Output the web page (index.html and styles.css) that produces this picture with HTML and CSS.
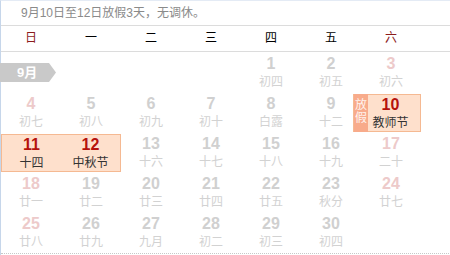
FILE: index.html
```html
<!DOCTYPE html>
<html lang="zh-CN">
<head>
    <meta charset="UTF-8">
    <meta name="viewport" content="width=device-width, initial-scale=1.0">
    <title>九月日历</title>
    <link rel="stylesheet" href="styles.css">
</head>
<body>
<div class="calendar">
    <div class="notice">9月10日至12日放假3天，无调休。</div>

    <div class="weekdays">
        <div class="weekend">日</div>
        <div>一</div>
        <div>二</div>
        <div>三</div>
        <div>四</div>
        <div>五</div>
        <div class="weekend">六</div>
    </div>

    <!-- month label sits over the empty start of the first week -->
    <div class="month-tag">9月</div>

    <div class="days">
        <div class="day empty"></div>
        <div class="day empty"></div>
        <div class="day empty"></div>
        <div class="day empty"></div>
        <div class="day"><span class="num">1</span><span class="lunar">初四</span></div>
        <div class="day"><span class="num">2</span><span class="lunar">初五</span></div>
        <div class="day sat"><span class="num">3</span><span class="lunar">初六</span></div>

        <div class="day sun"><span class="num">4</span><span class="lunar">初七</span></div>
        <div class="day"><span class="num">5</span><span class="lunar">初八</span></div>
        <div class="day"><span class="num">6</span><span class="lunar">初九</span></div>
        <div class="day"><span class="num">7</span><span class="lunar">初十</span></div>
        <div class="day"><span class="num">8</span><span class="lunar">白露</span></div>
        <div class="day"><span class="num">9</span><span class="lunar">十二</span></div>
        <div class="day holiday single"><span class="off-tag">放<br>假</span><span class="num">10</span><span class="lunar">教师节</span></div>

        <div class="day holiday first"><span class="num">11</span><span class="lunar">十四</span></div>
        <div class="day holiday last"><span class="num">12</span><span class="lunar">中秋节</span></div>
        <div class="day"><span class="num">13</span><span class="lunar">十六</span></div>
        <div class="day"><span class="num">14</span><span class="lunar">十七</span></div>
        <div class="day"><span class="num">15</span><span class="lunar">十八</span></div>
        <div class="day"><span class="num">16</span><span class="lunar">十九</span></div>
        <div class="day sat"><span class="num">17</span><span class="lunar">二十</span></div>

        <div class="day sun"><span class="num">18</span><span class="lunar">廿一</span></div>
        <div class="day"><span class="num">19</span><span class="lunar">廿二</span></div>
        <div class="day"><span class="num">20</span><span class="lunar">廿三</span></div>
        <div class="day"><span class="num">21</span><span class="lunar">廿四</span></div>
        <div class="day"><span class="num">22</span><span class="lunar">廿五</span></div>
        <div class="day"><span class="num">23</span><span class="lunar">秋分</span></div>
        <div class="day sat"><span class="num">24</span><span class="lunar">廿七</span></div>

        <div class="day sun"><span class="num">25</span><span class="lunar">廿八</span></div>
        <div class="day"><span class="num">26</span><span class="lunar">廿九</span></div>
        <div class="day"><span class="num">27</span><span class="lunar">九月</span></div>
        <div class="day"><span class="num">28</span><span class="lunar">初二</span></div>
        <div class="day"><span class="num">29</span><span class="lunar">初三</span></div>
        <div class="day"><span class="num">30</span><span class="lunar">初四</span></div>
    </div>
</div>
</body>
</html>
```

FILE: styles.css
```css
body {
    margin: 0;
    background: #fff;
    font-family: "Liberation Sans", "Noto Sans CJK SC", sans-serif;
}

.calendar {
    position: relative;
    width: 450px;
    height: 255px;
    box-sizing: border-box;
    border-left: 1px solid #c6d6ea;
    border-top: 1px solid #e4ebf5;
}

/* holiday notice line */
.notice {
    height: 24px;
    line-height: 24px;
    padding-left: 20px;
    font-size: 12px;
    color: #8a8a8a;
    border-bottom: 1px solid #dcdcdc;
}

.weekdays {
    display: grid;
    grid-template-columns: repeat(7, 60px);
    height: 25px;
    line-height: 25px;
    text-align: center;
    font-size: 12px;
    color: #000;
    border-bottom: 1px solid #dcdcdc;
}

.weekdays .weekend {
    color: #8c1c1c;
}

.month-tag {
    position: absolute;
    top: 62px;
    left: -1px;
    width: 56px;
    height: 19px;
    line-height: 19px;
    padding-left: 17px;
    box-sizing: border-box;
    background: #c9c9c9;
    color: #fff;
    font-size: 13px;
    font-weight: bold;
    clip-path: polygon(0 0, 49px 0, 100% 50%, 49px 100%, 0 100%);
}

.days {
    display: grid;
    grid-template-columns: repeat(7, 60px);
    grid-auto-rows: 40px;
    padding-top: 1px;
    border-bottom: 1px dotted #c8c8c8;
    margin-right: 1px;
}

.day {
    position: relative;
    display: flex;
    flex-direction: column;
    align-items: center;
    padding-top: 1px;
}

.num {
    font-size: 16px;
    font-weight: bold;
    line-height: 19px;
    color: #d0d0d0;
}

.lunar {
    font-size: 12px;
    line-height: 18px;
    color: #d2d2d2;
}

.sun .num,
.sat .num {
    color: #edcaca;
}

/* public holiday days */
.holiday {
    margin: 1px 0;
    padding-top: 0;
    background: #fee0cc;
    border-top: 1px solid #f5b992;
    border-bottom: 1px solid #f5b992;
}

.holiday.first {
    border-left: 1px solid #f5b992;
}

.holiday.last,
.holiday.single {
    border-right: 1px solid #f5b992;
}

.holiday .num {
    color: #b5120d;
}

.holiday .lunar {
    color: #333;
}

.off-tag {
    position: absolute;
    top: -1px;
    bottom: -1px;
    left: -8px;
    width: 15px;
    padding-top: 5px;
    box-sizing: border-box;
    border-left: 1px solid #f5b992;
    background: #f8ab8b;
    color: #fff3ee;
    font-size: 12px;
    line-height: 13px;
    text-align: center;
}
```
